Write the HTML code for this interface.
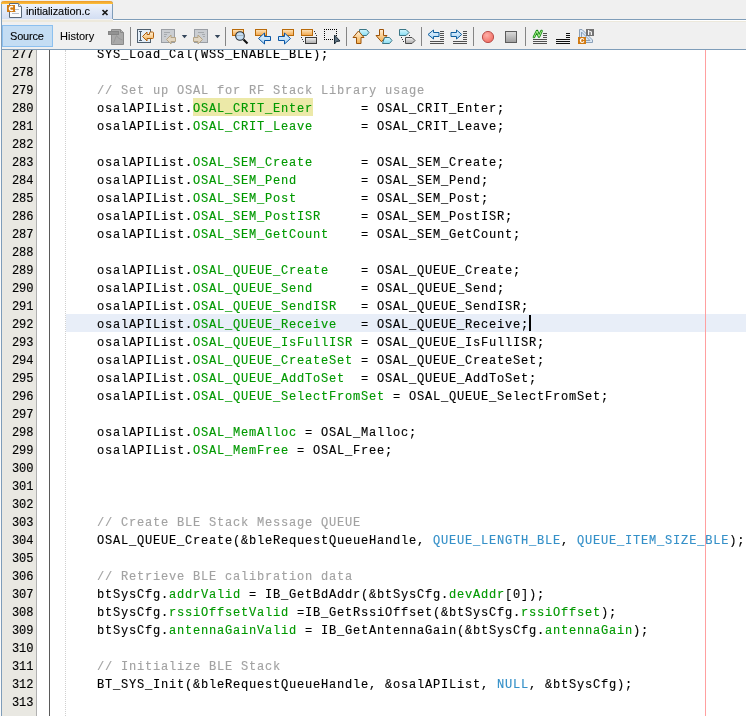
<!DOCTYPE html>
<html><head><meta charset="utf-8">
<style>
html,body{margin:0;padding:0;}
body>div,#lines>div{will-change:transform;}
body{width:746px;height:717px;position:relative;overflow:hidden;background:#f0f0f0;font-family:"Liberation Sans",sans-serif;}
.a{position:absolute;}
#tabbar{left:0;top:0;width:746px;height:20px;background:#f0f0f0;}
#tab{left:1px;top:1px;width:110px;height:18px;border-left:1px solid #7f9db9;border-right:1px solid #7f9db9;background:linear-gradient(#f4f7fd,#d3def3);border-top-left-radius:3px;border-top-right-radius:3px;}
#taborange{left:1px;top:1px;width:112px;height:3px;background:linear-gradient(#ec9a2c,#fcc13c);border-top-left-radius:3px;border-top-right-radius:3px;}
#tabtext{left:26px;top:4px;font-size:11px;color:#000;line-height:14px;letter-spacing:-0.1px;-webkit-text-stroke:0.1px #000;}
.ui{-webkit-text-stroke:0.1px #000;}
#editor{left:1px;top:49px;width:745px;height:668px;background:#fff;border-top:1px solid #7f9db9;}
#gutter{left:2px;top:50px;width:34px;height:666px;background:#e9e8e2;border-right:1px solid #b0b0b0;}
#leftborder{left:1px;top:4px;width:1px;height:712px;background:#7f9db9;}
.ln{position:absolute;left:2px;-webkit-text-stroke:0.15px;width:31.5px;text-align:right;font-family:"Liberation Mono",monospace;font-size:12px;letter-spacing:0px;line-height:18px;color:#000;}
.cl{position:absolute;left:65.4px;-webkit-text-stroke:0.15px;font-family:"Liberation Mono",monospace;font-size:12px;letter-spacing:0.8px;line-height:18px;color:#000;white-space:pre;}
.f{color:#009900;}
.c{color:#a2a2a2;}
.m{color:#3590c8;}
</style></head><body>
<div class="a" id="tabbar"></div>
<div class="a" id="tab"></div>
<div class="a" id="taborange"></div>
<div class="a" style="left:113px;top:19px;width:633px;height:1px;background:#7f9db9"></div>
<div class="a" style="left:113px;top:20px;width:633px;height:1px;background:#fff"></div>
<div class="a" style="left:113px;top:21px;width:633px;height:1px;background:#ede9dc"></div>
<div class="a" style="left:2px;top:20px;width:111px;height:2px;background:#ede9dc"></div>
<div class="a" id="tabtext">initialization.c</div>
<svg class="a" style="left:0;top:0" width="120" height="20" viewBox="0 0 120 20">
<path d="M9.5,3.5 H18.5 L21.5,6.5 V17.5 H9.5 Z" fill="#fbfcfe" stroke="#5a6878"/>
<path d="M18.5,3.5 V6.5 H21.5" fill="#e6eaf0" stroke="#7a8898"/>
<path d="M12,9.5 H19 M12,11.5 H16 M12,13.5 H19" stroke="#b8c0cc"/>
<rect x="7" y="5" width="8" height="7" fill="#d17a12"/>
<path d="M12.9,7.1 A2.0,2.0 0 1 0 12.9,9.9" fill="none" stroke="#fff" stroke-width="1.5"/>
<path d="M102.5,10 L107.5,15 M107.5,10 L102.5,15" stroke="#1a1a1a" stroke-width="1.7"/>
</svg>

<!-- toolbar -->
<div class="a" style="left:2px;top:25px;width:49px;height:20px;border:1px solid #8cc0ef;background:#c4ddf3"></div>
<div class="a ui" style="left:9.8px;top:29px;font-size:11px;line-height:14px;letter-spacing:-0.2px">Source</div>
<div class="a ui" style="left:60px;top:29px;font-size:11px;line-height:14px">History</div>

<svg class="a" style="left:0;top:0" width="746" height="50" viewBox="0 0 746 50">
<defs>
<linearGradient id="gOr" x1="0" y1="0" x2="0" y2="1"><stop offset="0" stop-color="#fde6c0"/><stop offset="1" stop-color="#f2a64a"/></linearGradient>
<linearGradient id="gOrA" x1="0" y1="0" x2="0" y2="1"><stop offset="0" stop-color="#fff0d8"/><stop offset="1" stop-color="#f4b050"/></linearGradient>
<linearGradient id="gBl" x1="0" y1="0" x2="0" y2="1"><stop offset="0" stop-color="#e8f4fe"/><stop offset="1" stop-color="#a8d4f6"/></linearGradient>
<linearGradient id="gCy" x1="0" y1="0" x2="0" y2="1"><stop offset="0" stop-color="#d8f6fc"/><stop offset="1" stop-color="#88def4"/></linearGradient>
<linearGradient id="gGr" x1="0" y1="0" x2="0" y2="1"><stop offset="0" stop-color="#f4f4f4"/><stop offset="1" stop-color="#a8a8a8"/></linearGradient>
<linearGradient id="gSq" x1="0" y1="0" x2="0" y2="1"><stop offset="0" stop-color="#dcdcdc"/><stop offset="1" stop-color="#9c9c9c"/></linearGradient>
<radialGradient id="gRed" cx="0.4" cy="0.35" r="0.7"><stop offset="0" stop-color="#ffb0a8"/><stop offset="1" stop-color="#f06a60"/></radialGradient>
</defs>
<!-- separators -->
<g fill="#858585"><rect x="130" y="27" width="1" height="19"/><rect x="225" y="27" width="1" height="19"/><rect x="346" y="27" width="1" height="19"/><rect x="421" y="27" width="1" height="19"/><rect x="473" y="27" width="1" height="19"/><rect x="525" y="27" width="1" height="19"/></g>
<!-- 1 gray doc -->
<path d="M111.5,29.5 H120.5 L123.5,32.5 V44.5 H111.5 Z" fill="#a9a9a9" stroke="#8a8a8a"/>
<rect x="108.5" y="31.5" width="10" height="3" fill="#929292" stroke="#858585"/>
<path d="M120.5,29.5 V32.5 H123.5" fill="#b4b4b4" stroke="#8a8a8a"/>
<path d="M113.5,43 Q115,39 116.5,35.5 Q118,39 122.5,40" fill="none" stroke="#989898"/>
<!-- 2 ibeam return -->
<rect x="137.5" y="29.5" width="13" height="13" fill="#e4eef8" stroke="#4f5f6f"/>
<path d="M139,31.5 H142 M140.5,31.5 V40.5 M139,40.5 H142" stroke="#4f5f6f" fill="none"/>
<path d="M142.5,36.5 L147,32 V34.5 H149.5 V33 Q149.5,32 150.5,32 H152.5 Q153.5,32 153.5,33 V37.5 Q153.5,38.5 152.5,38.5 H147 V41 Z" fill="url(#gOrA)" stroke="#b0600c"/>
<!-- 3 back doc -->
<rect x="161.5" y="29.5" width="13" height="13" fill="#cbced2" stroke="#9a9ea4"/>
<path d="M164,32.5 H170 M164,34.5 H167 M164,36.5 H166" stroke="#a6aaae"/>
<path d="M166.5,39.5 L171,35 V37.5 H175.5 V41.5 H171 V44 Z" fill="#e2d6c2" stroke="#b4a486"/>
<path d="M181.8,35 H187.2 L184.5,38.2 Z" fill="#34465a"/>
<!-- 4 fwd doc -->
<rect x="194.5" y="29.5" width="13" height="13" fill="#cbced2" stroke="#9a9ea4"/>
<path d="M198,32.5 H204 M202,34.5 H205 M203,36.5 H205" stroke="#a6aaae"/>
<path d="M202.5,39.5 L198,35 V37.5 H193.5 V41.5 H198 V44 Z" fill="#e2d6c2" stroke="#b4a486"/>
<path d="M214.8,35 H220.2 L217.5,38.2 Z" fill="#34465a"/>
<!-- 5 find -->
<rect x="232.5" y="29.5" width="11" height="6" fill="url(#gOr)" stroke="#b86a0a"/>
<path d="M243.5,39.5 L247.5,43.5" stroke="#101010" stroke-width="2.2"/>
<circle cx="240" cy="36" r="4.3" fill="#c4def4" stroke="#283038" stroke-width="1.1"/>
<path d="M237,35.5 H243" stroke="#a8b8c4"/>
<!-- 6 find prev -->
<rect x="255.5" y="29.5" width="11" height="6" fill="url(#gOr)" stroke="#b86a0a"/>
<path d="M258.5,38.5 L264.5,33 V36.5 H270.5 V40.5 H264.5 V44 Z" fill="url(#gBl)" stroke="#0a56a4"/>
<!-- 7 find next -->
<rect x="282.5" y="29.5" width="11" height="6" fill="url(#gOr)" stroke="#b86a0a"/>
<path d="M290.5,38.5 L284.5,33 V36.5 H278.5 V40.5 H284.5 V44 Z" fill="url(#gBl)" stroke="#0a56a4"/>
<!-- 8 toggle highlight -->
<rect x="301.5" y="29.5" width="11" height="6" fill="url(#gOr)" stroke="#b86a0a"/>
<rect x="305.5" y="37.5" width="11" height="6" fill="url(#gGr)" stroke="#3c3c3c"/>
<g fill="#303030"><rect x="314" y="31" width="1" height="1"/><rect x="315" y="33" width="1" height="1"/><rect x="316" y="35" width="1" height="1"/><rect x="301" y="37" width="1" height="1"/><rect x="302" y="39" width="1" height="1"/><rect x="303" y="41" width="1" height="1"/></g>
<!-- 9 rect select -->
<g fill="#000"><rect x="324" y="29" width="1" height="1"/><rect x="326" y="29" width="1" height="1"/><rect x="328" y="29" width="1" height="1"/><rect x="330" y="29" width="1" height="1"/><rect x="332" y="29" width="1" height="1"/><rect x="334" y="29" width="1" height="1"/><rect x="336" y="29" width="1" height="1"/>
<rect x="324" y="31" width="1" height="1"/><rect x="324" y="33" width="1" height="1"/><rect x="324" y="35" width="1" height="1"/><rect x="324" y="37" width="1" height="1"/><rect x="324" y="39" width="1" height="1"/>
<rect x="326" y="39" width="1" height="1"/><rect x="328" y="39" width="1" height="1"/><rect x="330" y="39" width="1" height="1"/><rect x="332" y="39" width="1" height="1"/>
<rect x="336" y="31" width="1" height="1"/><rect x="336" y="33" width="1" height="1"/><rect x="336" y="35" width="1" height="1"/></g>
<path d="M334.5,35 V44 L336.5,41.5 L340,41 Z" fill="#5c7080" stroke="#1c2c38" stroke-linejoin="round"/>
<!-- 10 prev bookmark -->
<path d="M359.5,29.5 H366.5 L369,32.5 L366.5,35.5 H359.5 Z" fill="url(#gCy)" stroke="#3a7686"/>
<path d="M358.5,31 L364,37.5 H361 V43.5 H356.5 V37.5 H353 Z" fill="url(#gOrA)" stroke="#9c5208"/>
<!-- 11 next bookmark -->
<path d="M379.5,29.5 H383.5 V35.5 H387 L381.5,41.8 L376,35.5 H379.5 Z" fill="url(#gOrA)" stroke="#9c5208"/>
<path d="M384.5,37.5 H389.5 L392,40.5 L389.5,43.5 H382.5 Z" fill="url(#gCy)" stroke="#3a7686"/>
<!-- 12 clear bookmarks -->
<path d="M399.5,29.5 H406 L409,32.5 L406,35.5 H399.5 Z" fill="url(#gCy)" stroke="#3a7686"/>
<path d="M405.5,37.5 H412 L415,40.5 L412,43.5 H405.5 Z" fill="url(#gGr)" stroke="#4c4c4c"/>
<g fill="#303030"><rect x="401" y="37" width="1" height="1"/><rect x="402" y="39" width="1" height="1"/><rect x="403" y="41" width="1" height="1"/><rect x="409" y="35" width="1" height="1"/></g>
<!-- 13 shift left -->
<path d="M428,34.5 L433.5,30 V32.5 H439 V36.5 H433.5 V39 Z" fill="url(#gBl)" stroke="#0e5e9e"/>
<g fill="#505050"><rect x="440" y="31" width="4" height="1"/><rect x="440" y="33" width="4" height="1"/><rect x="440" y="35" width="4" height="1"/><rect x="440" y="37" width="4" height="1"/><rect x="440" y="39" width="4" height="1"/><rect x="430" y="41" width="14" height="1"/><rect x="430" y="43" width="14" height="1"/></g>
<!-- 14 shift right -->
<path d="M461.7,34.5 L456.5,30 V32.5 H451 V36.5 H456.5 V39 Z" fill="url(#gBl)" stroke="#0e5e9e"/>
<g fill="#505050"><rect x="463" y="31" width="4" height="1"/><rect x="463" y="33" width="4" height="1"/><rect x="463" y="35" width="4" height="1"/><rect x="463" y="37" width="4" height="1"/><rect x="463" y="39" width="4" height="1"/><rect x="453" y="41" width="14" height="1"/><rect x="453" y="43" width="14" height="1"/></g>
<!-- 15 record -->
<circle cx="488" cy="37" r="5.6" fill="url(#gRed)" stroke="#b8504c" stroke-width="1"/>
<!-- 16 stop -->
<rect x="505.5" y="31.5" width="11" height="11" fill="url(#gSq)" stroke="#5c5c5c"/>
<!-- 17 N macro -->
<path d="M534,37 L537,31 L539,36.5 L541.5,31" fill="none" stroke="#108a10" stroke-width="2.6" stroke-linecap="round" stroke-linejoin="round"/>
<path d="M534,37 L537,31 L539,36.5 L541.5,31" fill="none" stroke="#b0f090" stroke-width="1" stroke-linecap="round" stroke-linejoin="round"/>
<g fill="#505050"><rect x="543" y="33" width="4" height="1"/><rect x="543" y="35" width="4" height="1"/><rect x="543" y="37" width="4" height="1"/><rect x="533" y="39" width="14" height="1"/><rect x="533" y="41" width="14" height="1"/><rect x="533" y="43" width="14" height="1"/></g>
<!-- 18 -->
<g fill="#101010"><rect x="566" y="33" width="4" height="1"/><rect x="566" y="35" width="4" height="1"/><rect x="566" y="37" width="4" height="1"/><rect x="556" y="39" width="14" height="1"/><rect x="556" y="41" width="14" height="1"/><rect x="556" y="43" width="14" height="1"/></g>
<!-- 19 c/h -->
<path d="M579.5,29.5 H582 L592.5,40 V42.5 H579.5 Z" fill="#dce8f4" stroke="#8aa0b8"/>
<path d="M581.5,32 L590,40.5 H581.5 Z" fill="none" stroke="#8aa0b8"/>
<rect x="586" y="29" width="8" height="7" fill="#737373"/>
<text x="590" y="35.3" font-family="Liberation Sans" font-weight="bold" font-size="8" fill="#fff" text-anchor="middle">h</text>
<rect x="578" y="37" width="8" height="7" fill="#d17a12"/>
<text x="582" y="42.6" font-family="Liberation Sans" font-weight="bold" font-size="9" fill="#fff" text-anchor="middle">c</text>
</svg>

<div class="a" id="editor"></div>
<div class="a" id="gutter"></div>
<div class="a" style="left:49px;top:50px;width:1px;height:666px;background:#5a5a5a"></div>
<div class="a" style="left:65px;top:50px;width:0;height:666px;border-left:1px dotted #d0d0d0"></div>
<div class="a" style="left:66px;top:314px;width:680px;height:18px;background:#e8eef8"></div>
<div class="a" style="left:193px;top:98px;width:120px;height:18px;background:#ece9a8"></div>
<div class="a" style="left:705px;top:50px;width:1px;height:666px;background:#ffa0a0"></div>
<div class="a" style="left:529px;top:315px;width:2px;height:16px;background:#000"></div>

<div class="a" id="lines" style="left:0;top:50px;width:746px;height:666px;overflow:hidden"><!--L-->
<div class="ln" style="top:-4px">277</div>
<div class="cl" style="top:-4px">    SYS_Load_Cal(WSS_ENABLE_BLE);</div>
<div class="ln" style="top:14px">278</div>
<div class="ln" style="top:32px">279</div>
<div class="cl" style="top:32px"><span class="c">    // Set up OSAL for RF Stack Library usage</span></div>
<div class="ln" style="top:50px">280</div>
<div class="cl" style="top:50px">    osalAPIList.<span class="f">OSAL_CRIT_Enter</span>      = OSAL_CRIT_Enter;</div>
<div class="ln" style="top:68px">281</div>
<div class="cl" style="top:68px">    osalAPIList.<span class="f">OSAL_CRIT_Leave</span>      = OSAL_CRIT_Leave;</div>
<div class="ln" style="top:86px">282</div>
<div class="ln" style="top:104px">283</div>
<div class="cl" style="top:104px">    osalAPIList.<span class="f">OSAL_SEM_Create</span>      = OSAL_SEM_Create;</div>
<div class="ln" style="top:122px">284</div>
<div class="cl" style="top:122px">    osalAPIList.<span class="f">OSAL_SEM_Pend</span>        = OSAL_SEM_Pend;</div>
<div class="ln" style="top:140px">285</div>
<div class="cl" style="top:140px">    osalAPIList.<span class="f">OSAL_SEM_Post</span>        = OSAL_SEM_Post;</div>
<div class="ln" style="top:158px">286</div>
<div class="cl" style="top:158px">    osalAPIList.<span class="f">OSAL_SEM_PostISR</span>     = OSAL_SEM_PostISR;</div>
<div class="ln" style="top:176px">287</div>
<div class="cl" style="top:176px">    osalAPIList.<span class="f">OSAL_SEM_GetCount</span>    = OSAL_SEM_GetCount;</div>
<div class="ln" style="top:194px">288</div>
<div class="ln" style="top:212px">289</div>
<div class="cl" style="top:212px">    osalAPIList.<span class="f">OSAL_QUEUE_Create</span>    = OSAL_QUEUE_Create;</div>
<div class="ln" style="top:230px">290</div>
<div class="cl" style="top:230px">    osalAPIList.<span class="f">OSAL_QUEUE_Send</span>      = OSAL_QUEUE_Send;</div>
<div class="ln" style="top:248px">291</div>
<div class="cl" style="top:248px">    osalAPIList.<span class="f">OSAL_QUEUE_SendISR</span>   = OSAL_QUEUE_SendISR;</div>
<div class="ln" style="top:266px">292</div>
<div class="cl" style="top:266px">    osalAPIList.<span class="f">OSAL_QUEUE_Receive</span>   = OSAL_QUEUE_Receive;</div>
<div class="ln" style="top:284px">293</div>
<div class="cl" style="top:284px">    osalAPIList.<span class="f">OSAL_QUEUE_IsFullISR</span> = OSAL_QUEUE_IsFullISR;</div>
<div class="ln" style="top:302px">294</div>
<div class="cl" style="top:302px">    osalAPIList.<span class="f">OSAL_QUEUE_CreateSet</span> = OSAL_QUEUE_CreateSet;</div>
<div class="ln" style="top:320px">295</div>
<div class="cl" style="top:320px">    osalAPIList.<span class="f">OSAL_QUEUE_AddToSet</span>  = OSAL_QUEUE_AddToSet;</div>
<div class="ln" style="top:338px">296</div>
<div class="cl" style="top:338px">    osalAPIList.<span class="f">OSAL_QUEUE_SelectFromSet</span> = OSAL_QUEUE_SelectFromSet;</div>
<div class="ln" style="top:356px">297</div>
<div class="ln" style="top:374px">298</div>
<div class="cl" style="top:374px">    osalAPIList.<span class="f">OSAL_MemAlloc</span> = OSAL_Malloc;</div>
<div class="ln" style="top:392px">299</div>
<div class="cl" style="top:392px">    osalAPIList.<span class="f">OSAL_MemFree</span> = OSAL_Free;</div>
<div class="ln" style="top:410px">300</div>
<div class="ln" style="top:428px">301</div>
<div class="ln" style="top:446px">302</div>
<div class="ln" style="top:464px">303</div>
<div class="cl" style="top:464px"><span class="c">    // Create BLE Stack Message QUEUE</span></div>
<div class="ln" style="top:482px">304</div>
<div class="cl" style="top:482px">    OSAL_QUEUE_Create(&amp;bleRequestQueueHandle, <span class="m">QUEUE_LENGTH_BLE</span>, <span class="m">QUEUE_ITEM_SIZE_BLE</span>);</div>
<div class="ln" style="top:500px">305</div>
<div class="ln" style="top:518px">306</div>
<div class="cl" style="top:518px"><span class="c">    // Retrieve BLE calibration data</span></div>
<div class="ln" style="top:536px">307</div>
<div class="cl" style="top:536px">    btSysCfg.<span class="f">addrValid</span> = IB_GetBdAddr(&amp;btSysCfg.<span class="f">devAddr</span>[0]);</div>
<div class="ln" style="top:554px">308</div>
<div class="cl" style="top:554px">    btSysCfg.<span class="f">rssiOffsetValid</span> =IB_GetRssiOffset(&amp;btSysCfg.<span class="f">rssiOffset</span>);</div>
<div class="ln" style="top:572px">309</div>
<div class="cl" style="top:572px">    btSysCfg.<span class="f">antennaGainValid</span> = IB_GetAntennaGain(&amp;btSysCfg.<span class="f">antennaGain</span>);</div>
<div class="ln" style="top:590px">310</div>
<div class="ln" style="top:608px">311</div>
<div class="cl" style="top:608px"><span class="c">    // Initialize BLE Stack</span></div>
<div class="ln" style="top:626px">312</div>
<div class="cl" style="top:626px">    BT_SYS_Init(&amp;bleRequestQueueHandle, &amp;osalAPIList, <span class="m">NULL</span>, &amp;btSysCfg);</div>
<div class="ln" style="top:644px">313</div>
<!--/L-->
</div>
<div class="a" id="leftborder"></div>
<div class="a" style="left:0;top:716px;width:746px;height:1px;background:#fff"></div>
<div class="a" style="left:0;top:0;width:1px;height:717px;background:#fbfbfb"></div>
</body></html>
